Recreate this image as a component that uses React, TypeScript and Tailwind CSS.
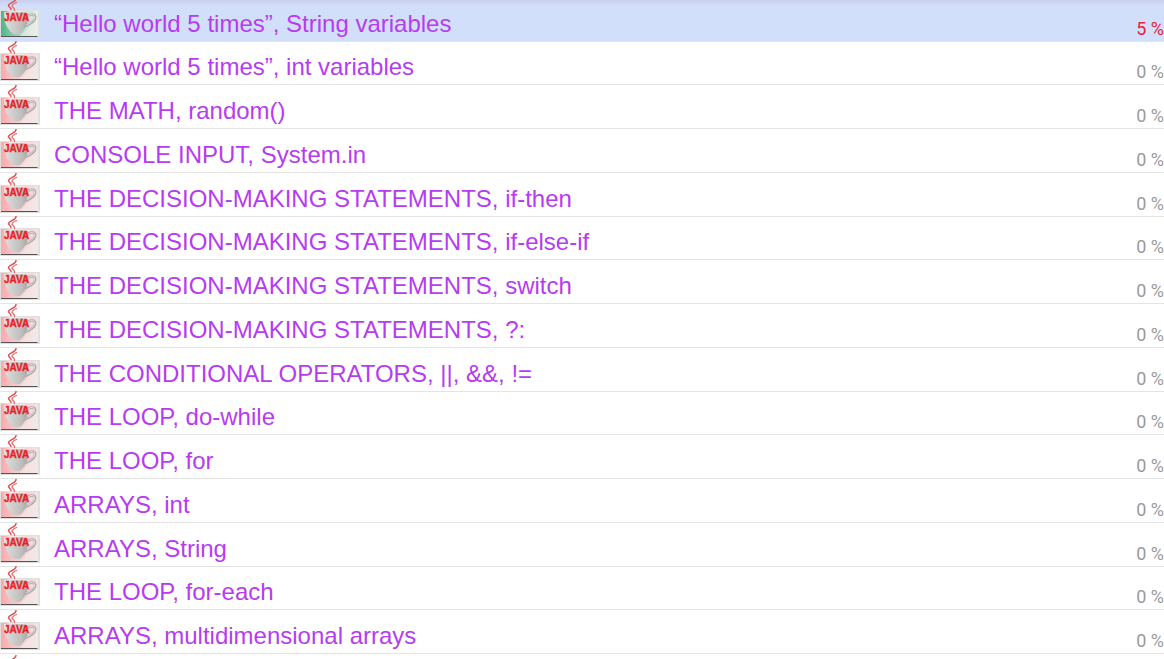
type Lesson = {
  title: string;
  progress: number;
};

const lessons: Lesson[] = [
  { title: "“Hello world 5 times”, String variables", progress: 5 },
  { title: "“Hello world 5 times”, int variables", progress: 0 },
  { title: "THE MATH, random()", progress: 0 },
  { title: "CONSOLE INPUT, System.in", progress: 0 },
  { title: "THE DECISION-MAKING STATEMENTS, if-then", progress: 0 },
  { title: "THE DECISION-MAKING STATEMENTS, if-else-if", progress: 0 },
  { title: "THE DECISION-MAKING STATEMENTS, switch", progress: 0 },
  { title: "THE DECISION-MAKING STATEMENTS, ?:", progress: 0 },
  { title: "THE CONDITIONAL OPERATORS, ||, &&, !=", progress: 0 },
  { title: "THE LOOP, do-while", progress: 0 },
  { title: "THE LOOP, for", progress: 0 },
  { title: "ARRAYS, int", progress: 0 },
  { title: "ARRAYS, String", progress: 0 },
  { title: "THE LOOP, for-each", progress: 0 },
  { title: "ARRAYS, multidimensional arrays", progress: 0 },
];

function Steam() {
  return (
    <g fill="none" strokeLinecap="round">
      <path d="M16 0.5C16 4 9 5 8.5 7.5C8.5 9 11 9.5 11 11.5" stroke="#e05050" strokeWidth="1.5" />
      <path d="M16.5 4.5C14 5.5 12 6.5 12 8.5C13 9.5 15 10 14.5 12.5" stroke="#e86a6a" strokeWidth="1.3" />
    </g>
  );
}

function JavaCup({ started }: { started: boolean }) {
  const id = started ? "cup-started" : "cup-new";

  return (
    <svg className="w-10 h-10 shrink-0" viewBox="0 0 40 40" aria-hidden="true">
      <defs>
        <linearGradient id={`${id}-bg`} x1="0" y1="0" x2="1" y2="0">
          <stop offset="0" stopColor={started ? "#4fb389" : "#f9a9ab"} />
          <stop offset="0.35" stopColor={started ? "#8ccfb0" : "#fac6c8"} />
          <stop offset="0.8" stopColor={started ? "#cfe9dc" : "#f8d8d8"} />
          <stop offset="1" stopColor={started ? "#e2f0e8" : "#f5e2e2"} />
        </linearGradient>
        <linearGradient id={`${id}-body`} x1="0" y1="0" x2="1" y2="0">
          <stop offset="0" stopColor="#dfdfdd" />
          <stop offset="0.35" stopColor="#cfd0ce" />
          <stop offset="0.75" stopColor="#bdbebc" />
          <stop offset="1" stopColor="#a3a5a3" />
        </linearGradient>
      </defs>
      <rect x="0" y="12" width="40" height="28" fill="#e0dfdf" />
      <rect x="1" y="13" width="37" height="25" fill={`url(#${id}-bg)`} />
      <path d="M20 38L34 24L38 22V38Z" fill="#f0ecea" opacity="0.6" />
      <path
        d="M27 19C30 15 36 16 35 20C34.500 23.500 30 26 25 28"
        fill="none"
        stroke="#a9a9a7"
        strokeWidth="2.6"
      />
      <path
        d="M28 18.500C31 15 35.500 16 34.500 20C34 23 30 25.500 26 27"
        fill="none"
        stroke="#e6e6e4"
        strokeWidth="1"
      />
      <path
        d="M4 15C9 13 24 13 28 15C28 23 27 29 22 34C20 37 13 37 11 34C6 29 4 23 4 15Z"
        fill={`url(#${id}-body)`}
      />
      <path d="M4 15C9 13 24 13 28 15" fill="none" stroke="#f1f1ef" strokeWidth="1" />
      <path d="M1 38.500H37.500" stroke="#555353" strokeWidth="1.2" />
      <Steam />
      <text
        x="4"
        y="23"
        fill="#ec1c24"
        stroke="#ec1c24"
        strokeWidth="0.3"
        className="font-['Liberation_Sans',Arial,sans-serif] text-[10px] font-bold"
      >
        JAVA
      </text>
    </svg>
  );
}

function LessonRow({ title, progress }: Lesson) {
  const started = progress > 0;

  return (
    <li
      className={`h-11 first:h-[42px] [&:nth-child(4n+2)]:h-[43px] flex items-end border-b border-[#e4e4e4] ${
        started ? "bg-linear-to-b from-[#c8cfee] to-[#d2dffa] to-15%" : "bg-white"
      }`}
    >
      <div className="pb-[3px]">
        <JavaCup started={started} />
      </div>
      <a
        href="#"
        className="flex-1 min-w-0 truncate pl-3.5 pb-[3px] text-2xl leading-7 text-[#b73cf0]"
      >
        {title}
      </a>
      <span
        className={`font-[Roboto,sans-serif] text-lg leading-6 ${
          started ? "text-[#e8213f]" : "text-[#9a9a9a]"
        }`}
      >
        {progress} %
      </span>
    </li>
  );
}

export default function App() {
  return (
    <main className="h-screen overflow-hidden bg-white font-['Liberation_Sans',Arial,sans-serif]">
      <ul>
        {lessons.map((lesson) => (
          <LessonRow key={lesson.title} {...lesson} />
        ))}
      </ul>
      <svg className="w-10 h-10 mt-px" viewBox="0 0 40 40" aria-hidden="true">
        <Steam />
      </svg>
    </main>
  );
}
